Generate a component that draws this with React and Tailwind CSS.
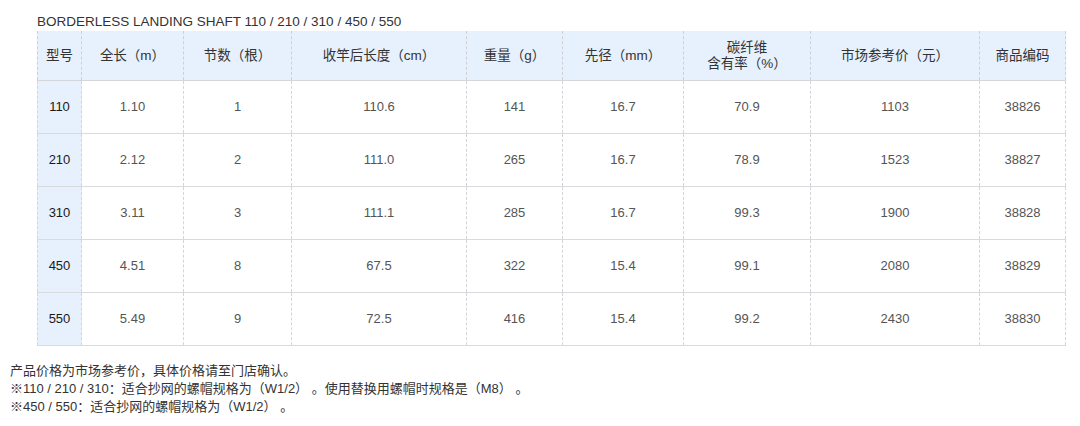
const cols = "grid grid-cols-[45px_102px_108px_175px_96px_121px_127px_169px_86px]";

const headers = [
  "型号",
  "全长（m）",
  "节数（根）",
  "收竿后长度（cm）",
  "重量（g）",
  "先径（mm）",
  ["碳纤维", "含有率（%）"],
  "市场参考价（元）",
  "商品编码",
];

const rows = [
  ["110", "1.10", "1", "110.6", "141", "16.7", "70.9", "1103", "38826"],
  ["210", "2.12", "2", "111.0", "265", "16.7", "78.9", "1523", "38827"],
  ["310", "3.11", "3", "111.1", "285", "16.7", "99.3", "1900", "38828"],
  ["450", "4.51", "8", "67.5", "322", "15.4", "99.1", "2080", "38829"],
  ["550", "5.49", "9", "72.5", "416", "15.4", "99.2", "2430", "38830"],
];

export default function App() {
  return (
    <div
      className="w-[1080px] h-[426px] bg-white overflow-hidden text-[#333]"
      style={{ fontFamily: '"Liberation Sans", "Noto Sans CJK SC", sans-serif' }}
    >
      <div className="pl-[37px] pt-[13px]">
        <p className="text-[13.5px] leading-[18px] text-[#333]">
          BORDERLESS LANDING SHAFT 110 / 210 / 310 / 450 / 550
        </p>

        <div className="w-[1029px]">
          <div className={`${cols} h-[50px] bg-[#e7f0fd] border-b border-[#d4d6da] shadow-[0_1px_1px_rgba(0,0,0,0.06)]`}>
            {headers.map((h, i) => (
              <div
                key={i}
                className={`flex flex-col items-center justify-center text-[13.5px] leading-[16px] text-[#333] border-r border-dashed border-[#cdd0d6] ${i === 0 ? "border-l" : ""}`}
              >
                {Array.isArray(h) ? h.map((t) => <span key={t}>{t}</span>) : h}
              </div>
            ))}
          </div>

          {rows.map((r) => (
            <div key={r[0]} className={`${cols} h-[53px] border-b border-[#d9dadd]`}>
              {r.map((v, i) => (
                <div
                  key={i}
                  className={`flex items-center justify-center text-[13px] border-r border-dashed border-[#d3d5d9] ${
                    i === 0 ? "border-l bg-[#e7f0fd] text-[#1a1a1a] font-medium" : "bg-white text-[#555]"
                  }`}
                >
                  {v}
                </div>
              ))}
            </div>
          ))}
        </div>
      </div>

      <div className="pl-[10px] pt-[16px] text-[13px] leading-[18px] text-[#333]">
        <p>产品价格为市场参考价，具体价格请至门店确认。</p>
        <p>※110 / 210 / 310：适合抄网的螺帽规格为（W1/2） 。使用替换用螺帽时规格是（M8） 。</p>
        <p>※450 / 550：适合抄网的螺帽规格为（W1/2） 。</p>
      </div>
    </div>
  );
}
